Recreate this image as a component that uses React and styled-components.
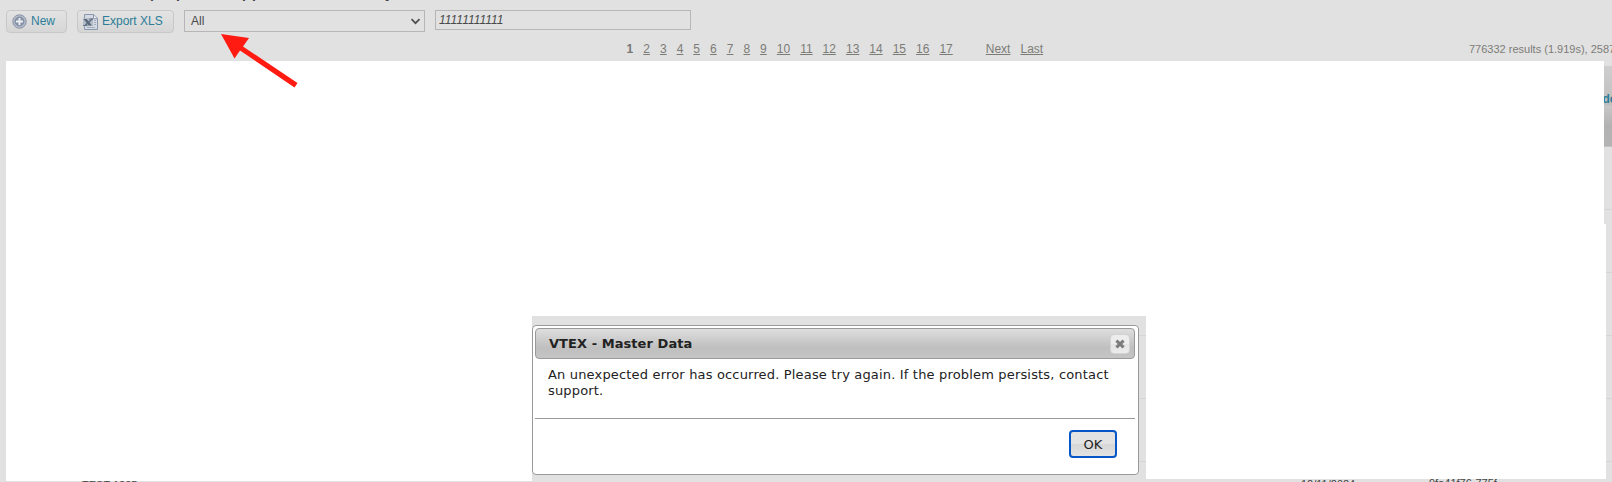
import React from 'react';
import styled, { createGlobalStyle } from 'styled-components';

const GlobalStyle = createGlobalStyle`
  * { box-sizing: border-box; }
  body {
    margin: 0;
    overflow: hidden;
    background: #e1e1e1;
    font-family: Arial, "Liberation Sans", sans-serif;
    font-size: 12px;
  }
  button, input { font: inherit; }
`;

const Page = styled.main`
  position: relative;
  width: 1612px;
  height: 482px;
  overflow: hidden;
  display: flex;
  flex-direction: column;
  background: #e1e1e1;
`;

const Heading = styled.div`
  display: flex;
  align-items: flex-end;
  height: 10px;
  padding: 0 0 9px 150px;
  overflow: hidden;
  font-size: 14px;
  font-weight: bold;
  line-height: 15px;
  color: #444;
`;

const HeadingWord = styled.span`
  flex: none;
  width: ${(p) => p.$w}px;
`;

const Toolbar = styled.div`
  display: flex;
  align-items: flex-start;
  gap: 10px;
  height: 31px;
  padding-left: 6px;
`;

const ToolButton = styled.button`
  display: flex;
  align-items: center;
  width: ${(p) => p.$w}px;
  height: 23px;
  padding: 0 0 2px 5px;
  gap: 4px;
  border: 1px solid #c8c8c8;
  border-radius: 4px;
  background: linear-gradient(#e3e3e3, #d6d6d6);
  color: #2b7d98;
  white-space: nowrap;

  svg { flex: none; position: relative; top: 1px; }
`;

const SelectBox = styled.div`
  display: flex;
  align-items: center;
  justify-content: space-between;
  width: 241px;
  height: 22px;
  padding: 0 3px 1px 6px;
  border: 1px solid #b6b6b6;
  color: #4a4a4a;

  svg { position: relative; top: 1px; }
`;

const SearchInput = styled.input`
  width: 256px;
  height: 20px;
  padding: 0 0 1px 3px;
  border: 1px solid #b6b6b6;
  border-radius: 0;
  outline: none;
  background: transparent;
  color: #4a4a4a;
  font-style: italic;
`;

const PagerRow = styled.div`
  display: flex;
  align-items: center;
  justify-content: space-between;
  height: 20px;
  padding-left: 626.6px;
  padding-bottom: 4px;
  color: #7c7c77;
  white-space: nowrap;
`;

const Pages = styled.nav`
  display: flex;
  gap: 10px;
`;

const PageLink = styled.a`
  color: inherit;
  text-decoration: underline;
  text-underline-offset: 1px;
  text-decoration-thickness: 1px;
  margin-left: ${(p) => (p.$spaced ? 23 : 0)}px;
`;

const CurrentPage = styled.b`
  color: #777;
`;

const ResultCount = styled.span`
  width: 143px;
  overflow: hidden;
  font-size: 11px;
`;

const Grid = styled.section`
  display: flex;
  flex-direction: column;
  height: 421px;
  margin-left: 6px;
  padding-top: 5px;
  overflow: hidden;
`;

const GridHead = styled.div`
  flex: none;
  height: 81px;
  padding: 26px 0 0 1596.5px;
  border-bottom: 1px solid #c2c2c2;
  background: linear-gradient(#cecece, #bfbfbf 39px, #c7c7c7 40px, #b2b2b2 60px, #b4b4b4);
  color: #2b7d98;
  font-weight: bold;
  white-space: nowrap;
`;

const GridRow = styled.div`
  flex: none;
  display: flex;
  height: 63px;
  border-bottom: 1px solid #d5d5d5;
  color: #444;
  font-size: 11px;
  white-space: nowrap;
`;

const Cell = styled.span`
  flex: none;
  width: ${(p) => p.$w}px;
  padding-top: ${(p) => p.$top}px;
  line-height: 13px;
  color: ${(p) => p.$color || 'inherit'};
`;

const Cover = styled.div`
  position: absolute;
  inset: 61px 0 0 6px;
  pointer-events: none;
`;

const CoverTop = styled.div`
  width: 1598px;
  height: 163px;
  background: #fff;
`;

const CoverMiddle = styled.div`
  width: 1600px;
  height: 92px;
  background: #fff;
`;

const CoverSides = styled.div`
  display: flex;
  align-items: flex-start;
  justify-content: space-between;
  width: 1600px;
`;

const CoverSide = styled.div`
  width: ${(p) => p.$w}px;
  height: ${(p) => p.$h}px;
  background: #fff;
`;

const Arrow = styled.svg`
  position: absolute;
  left: 215px;
  top: 30px;
`;

const Dialog = styled.div`
  position: absolute;
  left: 532px;
  top: 325px;
  display: flex;
  flex-direction: column;
  width: 607px;
  height: 150px;
  padding: 2px 3px 2px 2px;
  border: 1px solid #999;
  border-radius: 4px;
  background: #fff;
  color: #222;
  font-family: Verdana, "DejaVu Sans", sans-serif;
  font-size: 13px;
`;

const DialogTitle = styled.div`
  display: flex;
  align-items: center;
  justify-content: space-between;
  height: 31px;
  padding: 0 4px 0 13px;
  border: 1px solid #999;
  border-radius: 4px;
  background: linear-gradient(#dedede, #bfbfbf 65%, #c5c5c5);
  font-weight: bold;
  letter-spacing: 0.06px;
`;

const CloseButton = styled.button`
  display: grid;
  place-items: center;
  width: 20px;
  height: 20px;
  padding: 0;
  border: 1px solid #d3d3d3;
  border-radius: 4px;
  background: linear-gradient(#ededed 50%, #e3e3e3 50%, #ececec);
`;

const DialogBody = styled.p`
  height: 60px;
  margin: 0;
  padding: 8px 0 0 13px;
  border-bottom: 1px solid #999;
  line-height: 16px;
  letter-spacing: 0.172px;
  white-space: pre;
`;

const DialogFooter = styled.div`
  display: flex;
  justify-content: flex-end;
  padding: 11px 18px 0 0;
`;

const OkButton = styled.button`
  width: 48px;
  height: 28px;
  padding: 0;
  border: 2px solid #0656c7;
  border-radius: 4px;
  background: linear-gradient(#e3e3e3 50%, #d6d6d6 50%, #e3e3e3);
  color: #222;
`;

const PlusIcon = () => (
  <svg width="15" height="15" viewBox="0 0 15 15">
    <circle cx="7.5" cy="7.5" r="6.7" fill="#b9c1cd" stroke="#8591a3" />
    <circle cx="7.5" cy="7.5" r="5" fill="#8692a5" />
    <path d="M7.5 4v7M4 7.5h7" stroke="#e9edf2" strokeWidth="2" />
  </svg>
);

const SheetIcon = () => (
  <svg width="15" height="16" viewBox="0 0 15 16">
    <path d="M1.5.5h9.2l3.8 3.8v11.2h-13z" fill="#d3dae3" stroke="#8a98ae" />
    <path d="M10.5.7v4h3.8" fill="#eef1f5" stroke="#8b98ac" />
    <path d="M11 6.5h2M11 8.5h2M11 10.5h2M4 13.5h8" stroke="#a5b0bf" />
    <path d="M0 4.2h10v8H0z" fill="#b3bcc8" />
    <path d="M.5 4.9h3.2l5.3 6.5H5.6z" fill="#5c687b" />
    <path d="M9.5 4.7 2 11.5" stroke="#5f6c80" strokeWidth="1.5" />
    <path d="M0 11.5h4.5M6 5h4" stroke="#6c788b" />
  </svg>
);

const ChevronIcon = () => (
  <svg width="11" height="7" viewBox="0 0 11 7">
    <path d="m1.5 1.2 4 4 4-4" fill="none" stroke="#505050" strokeWidth="1.8" />
  </svg>
);

const CloseIcon = () => (
  <svg width="10" height="10" viewBox="0 0 10 10">
    <path d="m1.4 1.6 7.2 6.8M8.6 1.6 1.4 8.4" stroke="#7b7b7b" strokeWidth="3" />
  </svg>
);

const pages = Array.from({ length: 16 }, (_, i) => i + 2);

export default function App() {
  return (
    <>
      <GlobalStyle />
      <Page>
        <Heading>
          <HeadingWord $w={26}>p</HeadingWord>
          <HeadingWord $w={66}>p</HeadingWord>
          <HeadingWord $w={10}>p</HeadingWord>
          <HeadingWord $w={133}>p</HeadingWord>
          <HeadingWord $w={20}>y</HeadingWord>
        </Heading>
        <Toolbar>
          <ToolButton $w={61}><PlusIcon />New</ToolButton>
          <ToolButton $w={97}><SheetIcon />Export XLS</ToolButton>
          <SelectBox>All<ChevronIcon /></SelectBox>
          <SearchInput defaultValue="11111111111" />
        </Toolbar>
        <PagerRow>
          <Pages>
            <CurrentPage>1</CurrentPage>
            {pages.map((n) => <PageLink key={n}>{n}</PageLink>)}
            <PageLink $spaced>Next</PageLink>
            <PageLink>Last</PageLink>
          </Pages>
          <ResultCount>776332 results (1.919s), 2587</ResultCount>
        </PagerRow>
        <Grid>
          <GridHead>do</GridHead>
          <GridRow />
          <GridRow />
          <GridRow />
          <GridRow />
          <GridRow />
          <GridRow>
            <Cell $w={76} $top={17} />
            <Cell $w={1219} $top={17}>TEST 1235</Cell>
            <Cell $w={128} $top={16}>12/11/2024</Cell>
            <Cell $w={100} $top={15}>9fa41f76-775f-</Cell>
          </GridRow>
        </Grid>
        <Cover>
          <CoverTop />
          <CoverMiddle />
          <CoverSides>
            <CoverSide $w={526} $h={165} />
            <CoverSide $w={460} $h={163} />
          </CoverSides>
        </Cover>
        <Arrow width="90" height="62" viewBox="0 0 90 62">
          <path d="M6 4 34 8 28 16.5 82.5 53 79.5 57.5 25 20.5 19.5 28.5z" fill="#ff1a12" />
        </Arrow>
        <Dialog role="dialog">
          <DialogTitle>
            VTEX - Master Data
            <CloseButton aria-label="Close"><CloseIcon /></CloseButton>
          </DialogTitle>
          <DialogBody>
            {'An unexpected error has occurred. Please try again. If the problem persists, contact\nsupport.'}
          </DialogBody>
          <DialogFooter><OkButton>OK</OkButton></DialogFooter>
        </Dialog>
      </Page>
    </>
  );
}
